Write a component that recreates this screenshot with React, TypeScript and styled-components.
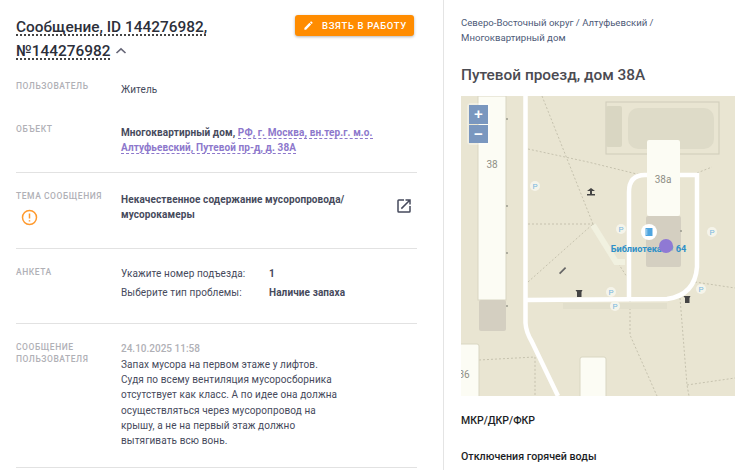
import React from 'react';
import styled, { createGlobalStyle } from 'styled-components';

const Global = createGlobalStyle`
  html, body { margin: 0; padding: 0; width: 735px; height: 470px; overflow: hidden; background: #fff; }
  * { box-sizing: border-box; }
`;
const Page = styled.div`
  width: 735px; height: 470px; overflow: hidden; display: flex;
  font-family: Roboto, "Liberation Sans", sans-serif; color: #464a5c; background: #fff;
`;
const Main = styled.main`
  width: 444px; flex: none; padding: 15px 26px 0 16px; border-right: 1px solid #e4e4e4;
`;
const Header = styled.header`
  display: flex; justify-content: space-between; align-items: flex-start; height: 65px;
`;
const Title = styled.h1`
  margin: 0; width: 230px; font-size: 15.4px; line-height: 24px; font-weight: 500; color: #2c2f3a;
`;
const Dotted = styled.span`
  text-decoration: underline dotted #444 2px; text-underline-offset: 2px; text-decoration-skip-ink: none;
`;
const Chevron = styled.svg`
  width: 14px; height: 14px; margin-left: 4px; vertical-align: -2px;
`;
const TakeButton = styled.button`
  height: 21px; width: 119px; margin-right: 3px; border: 0; border-radius: 3px; background: #ff8c00;
  color: #fff; font: 500 9.5px Roboto, sans-serif; letter-spacing: 0.65px; display: flex; align-items: center; gap: 8px;
  padding: 0 0 0 8px; box-shadow: 0 1px 3px rgba(0,0,0,.3); white-space: nowrap;
`;
const Row = styled.section<{ $h: number; $line?: boolean; $pad?: number }>`
  height: ${p => p.$h}px; display: grid; grid-template-columns: 105px 1fr; align-content: start; position: relative;
  border-bottom: ${p => (p.$line ? '1px solid #e2e2e2' : '0')};
  padding-top: ${p => p.$pad ?? 17}px;
`;
const Label = styled.div`
  font-size: 8.5px; line-height: 12px; font-weight: 500; letter-spacing: 0.55px; color: #b0b0b6; text-transform: uppercase;
`;
const Body = styled.div<{ $top?: number; $width?: number }>`
  font-size: 10px; line-height: 15.2px; letter-spacing: 0.1px; color: #464a5c;
  margin-top: ${p => p.$top ?? 0}px;
  width: ${p => (p.$width ? `${p.$width}px` : 'auto')};
`;
const Strong = styled.b`
  font-weight: 700;
`;
const AddressLink = styled.span`
  color: #8d78cc; font-weight: 700; border-bottom: 1px dashed #8d78cc;
`;
const Warn = styled.svg`
  display: block; width: 17px; height: 17px; margin: 7px 0 0 5px;
`;
const Open = styled.svg`
  position: absolute; right: 4px; top: 24px; width: 18px; height: 18px;
`;
const Survey = styled.div`
  display: grid; grid-template-columns: 148px 1fr; row-gap: 4px; font-size: 10px; line-height: 15px; letter-spacing: 0.1px;
`;
const Stamp = styled.div`
  color: #b0b0b6; font-weight: 500; font-size: 10px; line-height: 15px; margin-bottom: 1px;
`;
const Side = styled.aside`
  flex: 1; padding: 15px 0 0 17px; min-width: 0;
`;
const Crumbs = styled.div`
  font-size: 9.6px; line-height: 15px; color: #4d5a78; width: 230px;
`;
const Address = styled.h2`
  margin: 20px 0 11px; font-size: 15.4px; line-height: 20px; font-weight: 500; color: #4b4b52;
`;
const MapBox = styled.div`
  height: 300px; position: relative; overflow: hidden; background: #e9e5d2;
`;
const MapArt = styled.svg`
  display: block; width: 274px; height: 300px;
`;
const Zoom = styled.div`
  position: absolute; left: 8px; top: 9px; width: 19px; display: flex; flex-direction: column; gap: 1px;
  border-radius: 2px; box-shadow: 0 0 0 2px rgba(255,255,255,.35);
`;
const ZoomBtn = styled.div`
  height: 18.5px; background: #7a97bf; color: #fff; font: 700 15px/18px "Liberation Sans", sans-serif; text-align: center;
`;
const SideTitle = styled.div<{ $top: number; $size: number; $lh: number }>`
  margin-top: ${p => p.$top}px; font-size: ${p => p.$size}px; line-height: ${p => p.$lh}px; font-weight: 500; color: #1c1e26;
`;

const parkings = [[535,186],[621,229],[712,232],[701,289],[611,292],[615,306]];

export default function App() {
  return (
    <Page>
      <Global />
      <Main>
        <Header>
          <Title>
            <Dotted>Сообщение, ID 144276982, №144276982</Dotted>
            <Chevron viewBox="0 0 14 14"><path d="M2.5 9 7 4.8 11.5 9" fill="none" stroke="#667" strokeWidth="1.6" /></Chevron>
          </Title>
          <TakeButton>
            <svg width="11" height="11" viewBox="0 0 24 24" fill="#fff"><path d="M3 17.25V21h3.75L17.81 9.94l-3.75-3.75L3 17.25zM20.71 7.04a1 1 0 0 0 0-1.41l-2.34-2.34a1 1 0 0 0-1.41 0l-1.83 1.83 3.75 3.75 1.83-1.83z" /></svg>
            ВЗЯТЬ В РАБОТУ
          </TakeButton>
        </Header>
        <Row $h={43} $pad={0}>
          <Label>Пользователь</Label>
          <Body $top={2}>Житель</Body>
        </Row>
        <Row $h={50} $line $pad={0}>
          <Label>Объект</Label>
          <Body $top={2}>
            <Strong>Многоквартирный дом, </Strong>
            <AddressLink>РФ, г. Москва, вн.тер.г. м.о. Алтуфьевский, Путевой пр-д, д. 38А</AddressLink>
          </Body>
        </Row>
        <Row $h={76} $line>
          <div>
            <Label>Тема сообщения</Label>
            <Warn viewBox="0 0 17 17">
              <circle cx="8.5" cy="8.5" r="7" fill="none" stroke="#ff9a2e" strokeWidth="1.5" />
              <path d="M8.5 4.5v5M8.5 11.2v1.4" stroke="#ff9a2e" strokeWidth="1.5" />
            </Warn>
          </div>
          <Body $top={2} $width={240}><Strong>Некачественное содержание мусоропровода/ мусорокамеры</Strong></Body>
          <Open viewBox="0 0 24 24"><path d="M19 19H5V5h7V3H5a2 2 0 0 0-2 2v14a2 2 0 0 0 2 2h14a2 2 0 0 0 2-2v-7h-2v7zM14 3v2h3.59l-9.83 9.83 1.41 1.41L19 6.41V10h2V3h-7z" fill="#464a5c" /></Open>
        </Row>
        <Row $h={75} $line>
          <Label>Анкета</Label>
          <Survey>
            <span>Укажите номер подъезда:</span><Strong>1</Strong>
            <span>Выберите тип проблемы:</span><Strong>Наличие запаха</Strong>
          </Survey>
        </Row>
        <Row $h={144} $line>
          <Label>Сообщение<br />пользователя</Label>
          <div>
            <Stamp>24.10.2025 11:58</Stamp>
            <Body $width={218}>Запах мусора на первом этаже у лифтов. Судя по всему вентиляция мусоросборника отсутствует как класс. А по идее она должна осуществляться через мусоропровод на крышу, а не на первый этаж должно вытягивать всю вонь.</Body>
          </div>
        </Row>
      </Main>
      <Side>
        <Crumbs>Северо-Восточный округ / Алтуфьевский / Многоквартирный дом</Crumbs>
        <Address>Путевой проезд, дом 38А</Address>
        <MapBox>
          <MapArt viewBox="461 96 274 300">
            <rect x="461" y="96" width="274" height="300" fill="#e9e5d2" />
            <g fill="none" stroke="#bdb9a4" strokeWidth="0.8" strokeDasharray="2 2">
              <path d="M542 96 593 224M528 149 588 162 645 176M528 224H593L627 277M528 282 593 224" />
              <path d="M697 173 712 167M695 282 735 288M680 298 687 385 689 396M687 385 735 378M630 300V335L657 396M479 360 535 357V396" />
            </g>
            <rect x="606" y="102" width="113" height="52" fill="none" stroke="#cfccb9" />
            <rect x="606" y="106" width="16" height="41" rx="2" fill="#d9d6c2" />
            <rect x="628" y="108" width="86" height="41" rx="10" fill="#dedbc8" />
            <rect x="563" y="303" width="104" height="6" fill="#e2dfcc" />
            <path d="M593 225 616 262h9" stroke="#f1f1e0" strokeWidth="6" fill="none" />
            <g fill="none" stroke="#fff" strokeWidth="4.5">
              <path d="M525.5 96V323Q526 332 532 342L558 396" />
              <path d="M526 300 667 299Q695 295 697 267V175H645Q629 175 629 192V299" />
            </g>
            <rect x="478" y="96" width="28" height="204" fill="#fcfcf4" stroke="#d9d6c2" strokeWidth="1" />
            <rect x="479" y="300" width="27" height="31" rx="2" fill="#d4cfc1" />
            <rect x="647" y="140" width="33" height="76" rx="2" fill="#fcfcf4" />
            <rect x="646" y="216" width="35" height="51" rx="2" fill="#d4cfc1" />
            <rect x="458" y="344" width="21" height="56" rx="2" fill="#fcfcf4" stroke="#d9d6c2" />
            <rect x="580" y="357" width="26" height="44" rx="2" fill="#fcfcf4" stroke="#d9d6c2" />
            <g fill="#9a9a8e">
              <circle cx="507" cy="119" r="1" /><circle cx="507" cy="206" r="1" /><circle cx="507" cy="253" r="1" /><circle cx="507" cy="306" r="1" /><circle cx="681" cy="231" r="1" />
            </g>
            <text x="492" y="168" fontFamily="Roboto" fontSize="10" fill="#8f8f86" textAnchor="middle">38</text>
            <text x="663" y="183" fontFamily="Roboto" fontSize="10" fill="#8f8f86" textAnchor="middle">38а</text>
            <text x="464" y="378" fontFamily="Roboto" fontSize="10" fill="#8f8f86" textAnchor="middle">36</text>
            {parkings.map(([x, y]) => (
              <g key={`${x}-${y}`}>
                <circle cx={x} cy={y} r="5" fill="#f5f4ea" />
                <text x={x} y={y + 3} fontFamily="Roboto" fontSize="8" fill="#7ab8e0" textAnchor="middle">P</text>
              </g>
            ))}
            <path d="M591 188l4 3h-8zM592 191v3h3v1.5h-8V194h3v-3z" fill="#444" />
            <path d="M559 273l6-6 1.2 1.2-6 6z" fill="#666" />
            <path d="M575.5 290h7l-1 2v5h-4.5v-5zM683.500 296h7l-1 2v5H685v-5z" fill="#444" />
            <text x="648.500" y="252" fontFamily="Roboto" fontSize="9.200" fontWeight="700" fill="#2e90c8" textAnchor="middle">Библиотека № 64</text>
            <circle cx="649" cy="232" r="8" fill="#fff" />
            <path d="M645.500 228h7v8h-7z" fill="#4ea5e0" />
            <path d="M646.800 229v6" stroke="#bfe0f5" strokeWidth="0.8" />
            <circle cx="666" cy="246" r="7" fill="#8f79d4" />
          </MapArt>
          <Zoom>
            <ZoomBtn>+</ZoomBtn>
            <ZoomBtn>−</ZoomBtn>
          </Zoom>
        </MapBox>
        <SideTitle $top={17} $size={10.5} $lh={16}>МКР/ДКР/ФКР</SideTitle>
        <SideTitle $top={21} $size={10.7} $lh={14}>Отключения горячей воды</SideTitle>
      </Side>
    </Page>
  );
}
